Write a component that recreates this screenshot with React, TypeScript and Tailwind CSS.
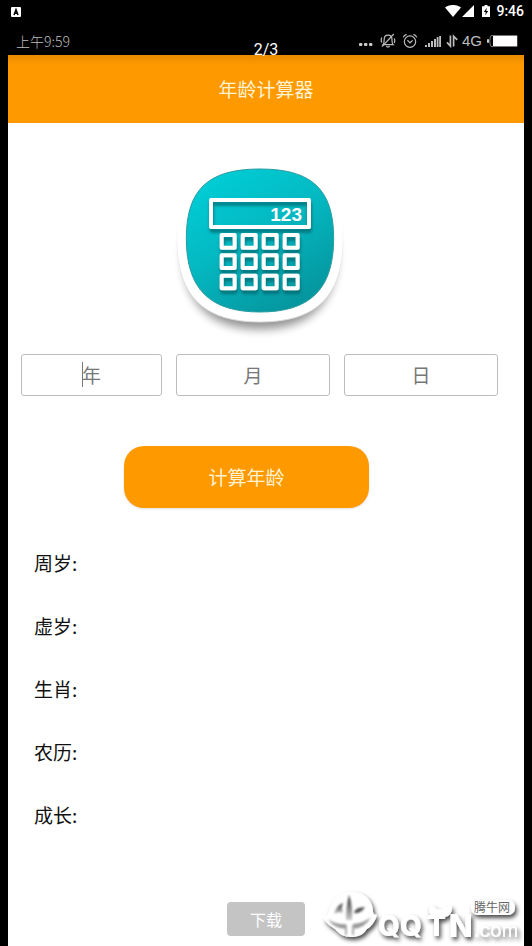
import {useState} from "react";
/*---------------------------- status bars ---------------------*/

const DeviceBar = () => {
    return (
        <div className="flex h-6 items-center justify-between pl-[3px] text-white">
            <svg className="size-[10px]" viewBox="0 0 10 10">
                <rect width="10" height="10" rx="1" fill="#fff"/>
                <path d="M3 8 L5 2.6 L7 8 M3.8 6.2 H6.2" stroke="#000" strokeWidth="1.5" fill="none"/>
            </svg>
            <div className="flex h-[22px] items-center self-start">
                <svg className="h-3 w-4" viewBox="0 0 16 12">
                    <path d="M0 2.6 C4.5 -0.9 11.5 -0.9 16 2.6 L8 12 Z" fill="#fff"/>
                </svg>
                <svg className="ml-px h-3 w-3" viewBox="0 0 12 12">
                    <path d="M12 0 V12 H0 Z" fill="#fff"/>
                </svg>
                <svg className="ml-2 h-3 w-2" viewBox="0 0 8 12">
                    <path d="M2.5 0 H5.5 V1.2 H8 V12 H0 V1.2 H2.5 Z" fill="#fff"/>
                    <path d="M4.8 2.8 L1.8 7 H3.8 L3.2 10.2 L6.2 6 H4.2 Z" fill="#000"/>
                </svg>
                <span className="ml-[6px] font-[Roboto] text-sm leading-6 font-medium">9:46</span>
            </div>
        </div>
    );
};

const PhoneBar = () => {
    return (
        <div className="flex h-[31px] items-center justify-between pt-[3px] pr-[6px] pl-2 text-[#bdbdbd]">
            <span className="text-sm leading-5 font-light">上午9:59</span>
            <div className="flex items-center">
                <svg className="h-4 w-[14px]" viewBox="0 0 14 16" fill="#ccc">
                    <rect x="0" y="10" width="3.4" height="3" rx="1"/>
                    <rect x="5" y="10" width="3.4" height="3" rx="1"/>
                    <rect x="10" y="10" width="3.4" height="3" rx="1"/>
                </svg>
                <svg className="ml-[7px] h-4 w-4" viewBox="0 0 16 16" fill="none" stroke="#bdbdbd" strokeWidth="1.2">
                    <path d="M3 11.6 H13.2 C11.8 10.4 12 8.6 12 6.4 C12 4 10.4 2.2 8 2.2 C5.6 2.2 4.2 4 4.2 6.4 C4.2 8.6 4.2 10.4 3 11.6 Z"/>
                    <path d="M6.4 13 C7 14.4 9 14.4 9.6 13"/>
                    <path d="M13.8 1 L2 13.6"/>
                    <path d="M1.8 4.4 C1 6 1 7.8 1.8 9.4 M14.2 5.4 C15 7 15 8.4 14.2 10"/>
                </svg>
                <svg className="ml-[6px] h-4 w-4" viewBox="0 0 16 16" fill="none" stroke="#bdbdbd" strokeWidth="1.2">
                    <circle cx="8" cy="8.6" r="5.7"/>
                    <path d="M5.4 7.2 L8 9.8 L10.6 7.4"/>
                    <path d="M1.2 4.4 C1.8 2.8 3 1.8 4.6 1.4 M11.4 1.4 C13 1.8 14.2 2.8 14.8 4.4"/>
                </svg>
                <svg className="ml-[7px] h-4 w-4" viewBox="0 0 16 16" fill="#bdbdbd">
                    <rect x="0" y="12" width="2" height="2"/>
                    <rect x="3" y="10" width="2" height="4"/>
                    <rect x="6" y="8" width="2" height="6"/>
                    <rect x="9" y="6" width="2" height="8"/>
                    <rect x="11.7" y="4" width="1.8" height="10"/>
                    <rect x="14.2" y="3" width="1.8" height="11"/>
                </svg>
                <svg className="ml-[5px] h-4 w-3" viewBox="0 0 12 16" fill="none" stroke="#bdbdbd" strokeWidth="1.7">
                    <path d="M4.4 2.6 V13 L1 9.4"/>
                    <path d="M7.6 13.6 V3.2 L11.2 6.8"/>
                </svg>
                <span className="ml-1 font-['Liberation_Sans'] text-[15px] leading-5">4G</span>
                <svg className="ml-[5px] h-3 w-[31px]" viewBox="0 0 31 12">
                    <rect x="0" y="4" width="2" height="4" rx="1" fill="#ccc"/>
                    <path d="M30 0.5 H4 Q2.8 2.4 2.8 6 Q2.8 9.6 4 11.5 H30 Z" fill="none" stroke="#777" strokeWidth="1"/>
                    <rect x="6" y="1" width="24" height="10" fill="#fff"/>
                </svg>
            </div>
        </div>
    );
};

/*---------------------------- calculator logo ---------------------*/
const keyRows = [255, 316, 377];
const keyCols = [185, 248, 311, 374];

const CalculatorLogo = () => {
    return (
        <svg className="h-[190px] w-[200px]" viewBox="0 0 600 570" role="img" aria-label="计算器">
            <defs>
                <linearGradient id="teal" x1="0.1" y1="0" x2="0.7" y2="1">
                    <stop offset="0" stopColor="#00d0d8"/>
                    <stop offset="0.5" stopColor="#04b8c1"/>
                    <stop offset="1" stopColor="#05959d"/>
                </linearGradient>
                <linearGradient id="rim" x1="0" y1="0" x2="0" y2="1">
                    <stop offset="0.35" stopColor="#fff"/>
                    <stop offset="0.8" stopColor="#dcdcdc"/>
                </linearGradient>
                <filter id="soft" x="-20%" y="-20%" width="140%" height="140%">
                    <feGaussianBlur stdDeviation="14"/>
                </filter>
                <filter id="drop" x="-20%" y="-20%" width="140%" height="150%">
                    <feDropShadow dx="2" dy="11" stdDeviation="5" floodColor="#005a62" floodOpacity="0.7"/>
                </filter>
            </defs>
            <path d="M300 200 C450 200 530 220 530 310 C530 460 450 538 300 538 C150 538 70 460 70 310 C70 220 150 200 300 200 Z" fill="#000" opacity="0.42" filter="url(#soft)"/>
            <path d="M300 38 C475 38 549 110 549 270 C549 445 462 516 300 516 C138 516 51 445 51 270 C51 110 125 38 300 38 Z" fill="#fff" stroke="url(#rim)" strokeWidth="3"/>
            <path d="M300 57 C455 57 521 118 521 265 C521 420 448 486 300 486 C152 486 79 420 79 265 C79 118 145 57 300 57 Z" fill="url(#teal)" stroke="#2a9ba1" strokeWidth="3"/>
            <g filter="url(#drop)" fill="none" stroke="#fff" strokeLinejoin="round">
                <rect x="153" y="150" width="294" height="81" strokeWidth="12"/>
                {keyRows.map((y) =>
                    keyCols.map((x) => (
                        <rect key={`${x}-${y}`} x={x} y={y} width="39" height="38" strokeWidth="12"/>
                    ))
                )}
            </g>
            <text x="426" y="212" textAnchor="end" fill="#fff" fontSize="57" fontWeight="700" fontFamily="Liberation Sans, sans-serif">123</text>
        </svg>
    );
};

/*---------------------------- site mark ---------------------*/
const SiteMark = () => {
    return (
        <svg className="absolute right-0 bottom-0 h-[66px] w-[206px]" viewBox="0 0 206 66" role="img" aria-label="QQTN.com">
            <defs>
                <filter id="lift" x="-10%" y="-10%" width="125%" height="135%">
                    <feDropShadow dx="2" dy="3" stdDeviation="2" floodColor="#000" floodOpacity="0.7"/>
                </filter>
                <filter id="haze">
                    <feGaussianBlur stdDeviation="0.8"/>
                </filter>
                <linearGradient id="slit" x1="0" y1="0" x2="0" y2="1">
                    <stop offset="0" stopColor="#333"/>
                    <stop offset="1" stopColor="#ccc"/>
                </linearGradient>
            </defs>
            <g filter="url(#lift)" fill="#fff">
                <path d="M11 31 C14 18 23 11 34 12 C47 12 55 21 55 32 Q55 35 59 35 Q56 45 49 49 C45 55 40 57 33 57 C26 57 21 54 17 49 Q8 44 5 37 Q9 38 11 31 Z"/>
            </g>
            <g filter="url(#haze)">
                <path d="M31 15 Q35 26 34 40 H28 Q28 26 31 15 Z" fill="url(#slit)"/>
                <path d="M25 23 Q18 26 16 34 Q20 31 25 33 Q23 28 25 23 Z" fill="url(#slit)"/>
                <path d="M36 33 Q37 27 47 27 Q43 34 36 33 Z" fill="#555"/>
                <path d="M10 39 Q17 45 28 44 V49 Q15 48 10 39 Z" fill="#999"/>
                <path d="M35 44 Q46 43 53 37 Q47 48 35 49 Z" fill="#999"/>
                <path d="M27 45 H29 V55 H27 Z M34 45 H36 V55 H34 Z" fill="#aaa"/>
            </g>
            <g filter="url(#lift)" fill="#fff" fontFamily="Inter, sans-serif">
                <text x="60" y="56" fontSize="28" fontWeight="800">QQ</text>
                <path d="M111 27 Q113 24 116 27 Q122 32 128 27 Q132 24 134 27 Q134 36 127 37 H117 Q110 36 111 27 Z"/>
                <text x="109" y="56" fontSize="28" fontWeight="800">T</text>
                <text x="131" y="57" fontSize="31" fontWeight="800">N</text>
                <text x="156" y="57" fontSize="19" fontWeight="400">.com</text>
                <rect x="153" y="20" width="44" height="15" rx="7"/>
            </g>
            <text x="156" y="32" fill="#666" fontSize="12" fontFamily="Noto Sans CJK SC, sans-serif">腾牛网</text>
        </svg>
    );
};

/*---------------------------- form ---------------------*/
type DateFieldProps = {
    label: string;
    value: string;
    caret?: boolean;
    onChange: (value: string) => void;
}

const DateField = ({label, value, caret = false, onChange}: DateFieldProps) => {
    return (
        <div className="relative">
            <input
                aria-label={label}
                placeholder={label}
                value={value}
                inputMode="numeric"
                onChange={(e) => onChange(e.target.value)}
                className="h-[42px] w-full rounded-[3px] border border-[#bcbcbc] pb-0.5 text-center text-[19px] text-[#333] outline-none placeholder:text-[#777]"
            />
            {caret && value === "" && <span className="absolute top-2 left-1/2 -ml-[10px] h-[25px] w-px bg-[#777]"/>}
        </div>
    );
};

const resultados = ["周岁", "虚岁", "生肖", "农历", "成长"];

export default function App() {
    const [year, setYear] = useState("");
    const [month, setMonth] = useState("");
    const [day, setDay] = useState("");

    return (
        <div className="relative flex min-h-screen flex-col bg-black px-2 font-['Noto_Sans_CJK_SC',sans-serif]">
            <DeviceBar/>
            <PhoneBar/>
            <span className="absolute top-10 left-0 z-10 w-full text-center font-[Roboto] text-base leading-5 text-white">2/3</span>
            <main className="relative flex grow flex-col overflow-hidden bg-white">
                <header className="flex h-[68px] items-center justify-center bg-[#ff9900] bg-linear-to-b from-[#e88b00] to-[#ff9900] to-15%">
                    <h1 className="text-[19px] leading-7 font-normal text-[#fff3d6]">年龄计算器</h1>
                </header>
                <div className="mt-[27px] flex justify-center pr-3">
                    <CalculatorLogo/>
                </div>
                <form className="mt-[14px]" onSubmit={(e) => e.preventDefault()}>
                    <div className="grid grid-cols-[11fr_12fr_12fr] gap-[14px] pr-[26px] pl-[13px]">
                        <DateField label="年" value={year} caret onChange={setYear}/>
                        <DateField label="月" value={month} onChange={setMonth}/>
                        <DateField label="日" value={day} onChange={setDay}/>
                    </div>
                    <div className="mt-[50px] pr-[155px] pl-[116px]">
                        <button type="submit" className="h-[62px] w-full rounded-[20px] bg-[#ff9900] text-[19px] text-[#fff3d6] shadow-sm">计算年龄</button>
                    </div>
                </form>
                <ul className="mt-[43px] flex flex-col gap-[39px] pl-[26px] text-[19px] leading-6 text-[#111]">
                    {resultados.map((nombre) => (
                        <li key={nombre}>{nombre}:</li>
                    ))}
                </ul>
                <button className="mx-auto mt-auto mb-[10px] h-[34px] w-[78px] rounded-[4px] bg-[#c4c4c4] text-base text-white">下载</button>
                <SiteMark/>
            </main>
        </div>
    );
}
